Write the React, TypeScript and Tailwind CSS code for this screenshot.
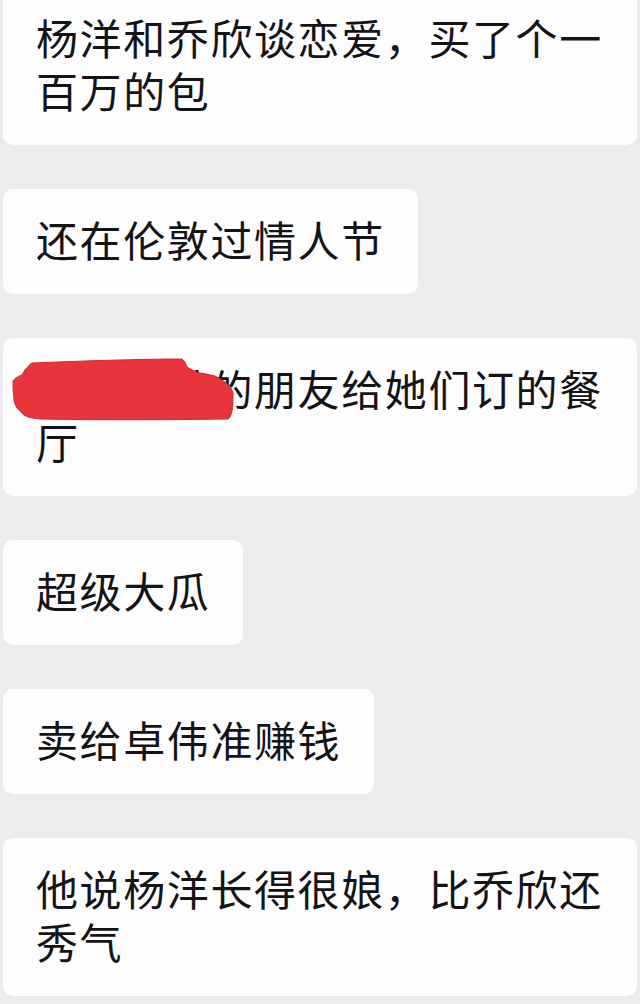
const MESSAGES = [
    { id: 1, text: "杨洋和乔欣谈恋爱，买了个一百万的包", full: true },
    { id: 2, text: "还在伦敦过情人节" },
    { id: 3, text: "某某某某的朋友给她们订的餐厅", full: true, redacted: true },
    { id: 4, text: "超级大瓜" },
    { id: 5, text: "卖给卓伟准赚钱" },
    { id: 6, text: "他说杨洋长得很娘，比乔欣还秀气", full: true },
];

// red marker scribble covering the name
function Scribble() {
    return (
        <svg
            viewBox="0 0 232 68"
            className="absolute left-[8px] top-[19px] w-[232px] h-[68px]"
        >
            <path
                d="M21 6 C70 4 130 2 171 2 C174 4 175 8 176 10 C181 13 185 15 189 16 C196 17 200 18 204 19 C214 24 221 30 222 36 C222 44 222 50 221 54 C220 58 219 61 217 62 C150 63 80 63 29 62 C20 61 14 60 11 56 C6 52 3 47 3 42 C2 35 2 28 2 24 C5 20 8 19 11 18 C13 14 15 11 17 10 C18 8 19 7 21 6 Z"
                fill="#e8353b"
                stroke="#cf2a31"
                strokeWidth="1"
            />
        </svg>
    );
}

export default function App() {
    return (
        <div className="min-h-screen overflow-hidden bg-[#ececee] px-[3px] font-['Noto_Sans_CJK_SC',sans-serif]">
            <div className="-mt-[13px] flex flex-col gap-[44px]">
                {MESSAGES.map((m) => (
                    <div
                        key={m.id}
                        className={
                            "relative rounded-[10px] bg-[#fdfdfe] pt-[23px] pb-[29px] pl-[33px] pr-[33px] text-[42px] leading-[53px] tracking-[1.6px] text-[#141417] " +
                            (m.full ? "w-full" : "self-start")
                        }
                    >
                        {m.text}
                        {m.redacted && <Scribble />}
                    </div>
                ))}
            </div>
        </div>
    );
}
